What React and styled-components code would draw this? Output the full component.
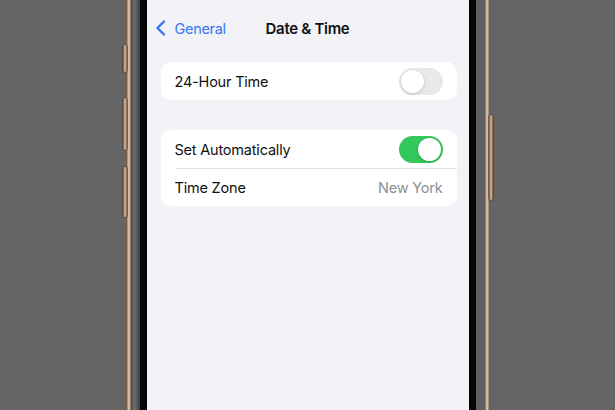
import React from "react";
import styled, { createGlobalStyle } from "styled-components";

const GlobalStyle = createGlobalStyle`
  html, body {
    margin: 0;
    padding: 0;
    background: #656565;
    overflow: hidden;
  }
  body {
    font-family: Inter, "Noto Sans", "Liberation Sans", sans-serif;
    -webkit-font-smoothing: antialiased;
  }
`;

const Stage = styled.div`
  width: 615px;
  height: 410px;
  overflow: hidden;
  display: flex;
  justify-content: center;
  align-items: stretch;
`;

const Phone = styled.div`
  position: relative;
  width: 364px;
  padding: 0 5px;
  box-sizing: border-box;
  background: linear-gradient(
    90deg,
    #5a4536 0px,
    #c9a88a 2px,
    #e8d2bc 3px,
    #7a5e48 5px,
    transparent 5px,
    transparent calc(100% - 5px),
    #7a5e48 calc(100% - 5px),
    #e8d2bc calc(100% - 3px),
    #c9a88a calc(100% - 2px),
    #5a4536 100%
  );
  display: flex;
`;

const Bezel = styled.div`
  flex: 1;
  padding: 0 9px;
  display: flex;
  background: linear-gradient(90deg, #4a4c50 0%, #6d6f73 40%, #3a3c40 100%);
  background-size: 9px 100%;
  background-repeat: no-repeat;
  background-color: #55575b;
  box-shadow: inset -9px 0 0 #5d5f63;
`;

const Black = styled.div`
  flex: 1;
  padding: 0 7px;
  display: flex;
  background: #050505;
`;

const Screen = styled.div`
  flex: 1;
  background: #f2f2f7;
  display: flex;
  flex-direction: column;
`;

const SideButton = styled.div`
  position: absolute;
  width: 4px;
  top: ${(p) => p.$top}px;
  height: ${(p) => p.$h}px;
  ${(p) => (p.$right ? "right: -3px;" : "left: -3px;")}
  border-radius: 2px;
  background: linear-gradient(90deg, #6b5140, #d9bda2 50%, #7a5c46);
  box-shadow: 0 0 0 0.5px #3d2e24;
`;

const NavBar = styled.div`
  height: 56px;
  display: flex;
  align-items: center;
  position: relative;
  padding-left: 8px;
`;

const Back = styled.div`
  display: flex;
  align-items: center;
  gap: 9px;
  color: #3478f6;
  font-size: 14.5px;
  letter-spacing: -0.3px;
`;

const Title = styled.div`
  position: absolute;
  left: 0;
  right: 0;
  text-align: center;
  font-size: 15px;
  font-weight: 600;
  color: #111;
  letter-spacing: -0.3px;
  pointer-events: none;
`;

const Group = styled.div`
  margin: 6px 12px 0 14px;
  background: #fff;
  border-radius: 10px;
  overflow: hidden;
  & + & {
    margin-top: 30px;
  }
`;

const Row = styled.div`
  height: ${(p) => p.$h || 37}px;
  margin-left: 14px;
  padding-right: 14px;
  display: flex;
  align-items: center;
  justify-content: space-between;
  font-size: 14.5px;
  color: #111;
  letter-spacing: -0.2px;
  & + & {
    border-top: 1px solid #e3e3e8;
  }
`;

const Value = styled.span`
  color: #8e8e93;
`;

const Switch = styled.div`
  width: 44px;
  height: 27px;
  border-radius: 14px;
  background: ${(p) => (p.$on ? "#34c759" : "#e9e9eb")};
  position: relative;
  flex-shrink: 0;
  &::after {
    content: "";
    position: absolute;
    top: 2px;
    left: ${(p) => (p.$on ? "19px" : "2px")};
    width: 23px;
    height: 23px;
    border-radius: 50%;
    background: #fff;
    box-shadow: 0 1px 3px rgba(0, 0, 0, 0.18), 0 0 0 0.5px rgba(0, 0, 0, 0.04);
  }
`;

const Chevron = () => (
  <svg width="11" height="16" viewBox="0 0 11 16">
    <path
      d="M9 1.5 L2.5 8 L9 14.5"
      fill="none"
      stroke="#3478f6"
      strokeWidth="2.4"
      strokeLinecap="round"
      strokeLinejoin="round"
    />
  </svg>
);

export default function App() {
  return (
    <>
      <GlobalStyle />
      <Stage>
        <Phone>
          <SideButton $top={45} $h={27} />
          <SideButton $top={98} $h={52} />
          <SideButton $top={167} $h={50} />
          <SideButton $right $top={115} $h={85} />
          <Bezel>
            <Black>
              <Screen>
                <NavBar>
                  <Back>
                    <Chevron />
                    General
                  </Back>
                  <Title>Date &amp; Time</Title>
                </NavBar>
                <Group>
                  <Row $h={38}>
                    24-Hour Time
                    <Switch />
                  </Row>
                </Group>
                <Group>
                  <Row $h={38}>
                    Set Automatically
                    <Switch $on />
                  </Row>
                  <Row>
                    Time Zone
                    <Value>New York</Value>
                  </Row>
                </Group>
              </Screen>
            </Black>
          </Bezel>
        </Phone>
      </Stage>
    </>
  );
}
